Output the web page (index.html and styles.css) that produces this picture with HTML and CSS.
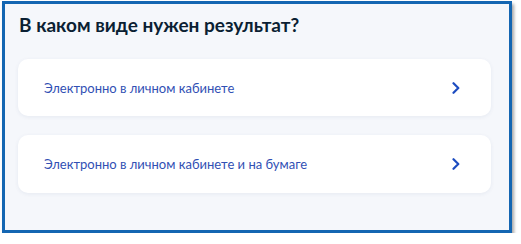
FILE: index.html
```html
<!DOCTYPE html>
<html lang="ru">
<head>
    <meta charset="UTF-8">
    <meta name="viewport" content="width=device-width, initial-scale=1.0">
    <title>В каком виде нужен результат?</title>
    <link rel="stylesheet" href="styles.css">
</head>
<body>

<div class="frame">
    <h1>В каком виде нужен результат?</h1>

    <div class="options">
        <a class="option" href="#">
            <span class="option-text">Электронно в личном кабинете</span>
            <svg class="chevron" width="8" height="12" viewBox="0 0 8 12">
                <path d="M1.5 1.2 L6.3 6 L1.5 10.8" fill="none" stroke="currentColor" stroke-width="2.2" stroke-linecap="round" stroke-linejoin="round"/>
            </svg>
        </a>
        <a class="option" href="#">
            <span class="option-text">Электронно в личном кабинете и на бумаге</span>
            <svg class="chevron" width="8" height="12" viewBox="0 0 8 12">
                <path d="M1.5 1.2 L6.3 6 L1.5 10.8" fill="none" stroke="currentColor" stroke-width="2.2" stroke-linecap="round" stroke-linejoin="round"/>
            </svg>
        </a>
    </div>
</div>

</body>
</html>
```

FILE: styles.css
```css
body {
    font-family: Lato, "Liberation Sans", sans-serif;
    background-color: #ffffff;
    margin: 0;
    padding: 1px 0 0 2px;
}
.frame {
    width: 510px;
    height: 232px;
    box-sizing: border-box;
    border: 3px solid #1466b2;
    background-color: #f5f7fb;
    box-shadow: 2px 3px 3px rgba(0, 0, 0, 0.35);
    padding: 9px 18px 0 13px;
}
h1 {
    margin: 0 0 0 1px;
    font-size: 19px;
    line-height: 24px;
    font-weight: bold;
    color: #0b1f33;
}
.options {
    display: flex;
    flex-direction: column;
    gap: 19px;
    margin-top: 22px;
}
.option {
    display: flex;
    align-items: center;
    justify-content: space-between;
    height: 57px;
    padding: 0 31px 0 26px;
    background: #ffffff;
    border-radius: 10px;
    box-shadow: 0 1px 4px rgba(30, 60, 120, 0.07);
    text-decoration: none;
}
.option + .option {
    height: 58px;
}
.option-text {
    font-size: 13px;
    color: #3150b4;
}
.chevron {
    color: #1d4cc0;
}
```
